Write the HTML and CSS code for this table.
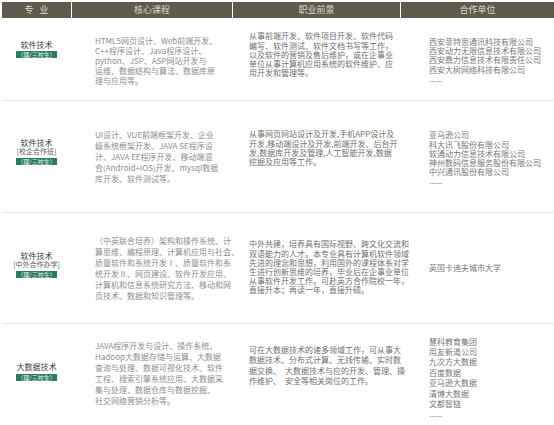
FILE: index.html
```html
<!DOCTYPE html>
<html lang="zh-CN">
<head>
<meta charset="utf-8">
<title>专业设置</title>
<link rel="stylesheet" href="styles.css">
</head>
<body>
<div class="table">
  <div class="head">
    <div class="hcell">专 业</div>
    <div class="hcell">核心课程</div>
    <div class="hcell">职业前景</div>
    <div class="hcell">合作单位</div>
  </div>

  <div class="row r1">
    <div class="major">
      <div class="name">软件技术</div>
      <div class="badge">（理/三校生）</div>
    </div>
    <div class="course">HTML5网页设计、Web前端开发、<br>C++程序设计、Java程序设计、<br>python、JSP、ASP网站开发与<br>运维、数据结构与算法、数据库原<br>理与应用等。</div>
    <div class="career">从事前端开发、软件项目开发、软件代码<br>编写、软件测试、软件文档书写等工作，<br>以及软件的营销及售后维护，或在企事业<br>单位从事计算机应用系统的软件维护、应<br>用开发和管理等。</div>
    <div class="partner">西安菲特思通讯科技有限公司<br>西安动力无限信息技术有限公司<br>西安鼎力信息技术有限责任公司<br>西安大树网络科技有限公司<br>......</div>
  </div>

  <div class="row r2">
    <div class="major">
      <div class="name">软件技术</div>
      <div class="sub">[校企合作班]</div>
      <div class="badge">（理/三校生）</div>
    </div>
    <div class="course">UI设计、VUE前端框架开发、企业<br>级系统框架开发、JAVA SE程序设<br>计、JAVA EE程序开发、移动端混<br>合(Android+IOS)开发、mysql数据<br>库开发、软件测试等。</div>
    <div class="career">从事网页网站设计及开发,手机APP设计及<br>开发,移动端设计及开发,前端开发、后台开<br>发,数据库开发及管理,人工智能开发,数据<br>挖掘及应用等工作。</div>
    <div class="partner">亚马逊公司<br>科大讯飞股份有限公司<br>软通动力信息技术有限公司<br>神州数码信息服务股份有限公司<br>中兴通讯股份有限公司<br>......</div>
  </div>

  <div class="row r3">
    <div class="major">
      <div class="name">软件技术</div>
      <div class="sub">[中外合作办学]</div>
      <div class="badge">（理/三校生）</div>
    </div>
    <div class="course">（中英联合培养）架构和操作系统、计<br>算思维、编程原理、计算机应用与社会、<br>质量软件和系统开发Ⅰ、质量软件和系<br>统开发Ⅱ、网页建设、软件开发应用、<br>计算机和信息系统研究方法、移动和网<br>页技术、数据和知识管理等。</div>
    <div class="career">中外共建，培养具有国际视野、跨文化交流和<br>双语能力的人才。本专业具有计算机软件领域<br>先进的理念和思想，利用国外的课程体系对学<br>生进行创新思维的培养，毕业后在企事业单位<br>从事软件开发工作。可赴英方合作院校一年，<br>直接升本；再读一年，直接升硕。</div>
    <div class="partner">英国卡迪夫城市大学</div>
  </div>

  <div class="row r4">
    <div class="major">
      <div class="name">大数据技术</div>
      <div class="badge">（理/三校生）</div>
    </div>
    <div class="course">JAVA程序开发与设计、操作系统、<br>Hadoop大数据存储与运算、大数据<br>查询与处理、数据可视化技术、软件<br>工程、搜索引擎系统应用、大数据采<br>集与处理、数据仓库与数据挖掘、<br>社交网络营销分析等。</div>
    <div class="career">可在大数据技术的诸多领域工作，可从事大<br>数据技术、分布式计算、无线传输、实时数<br>据交换、　大数据技术与应的开发、管理、操<br>作维护、　安全等相关岗位的工作。</div>
    <div class="partner">慧科教育集团<br>用友新道公司<br>九次方大数据<br>百度数据<br>亚马逊大数据<br>清博大数据<br>文都智链<br>......</div>
  </div>
</div>
</body>
</html>
```

FILE: styles.css
```css
* { box-sizing: border-box; }

html, body {
  margin: 0;
  padding: 0;
  background: #ffffff;
}

body {
  font-family: "Noto Sans CJK SC", "Noto Sans", sans-serif;
  width: 554px;
  height: 425px;
  overflow: hidden;
}

.table {
  padding: 2px 0 0 2px;
}

.head,
.row {
  display: grid;
  grid-template-columns: 69px 160px 167px 153px;
  column-gap: 1px;
}

.head {
  height: 16px;
}

.hcell {
  background: #5f5b4c;
  color: #dcd9cd;
  font-size: 9px;
  line-height: 16px;
  text-align: center;
}

.hcell:first-child {
  letter-spacing: 2px;
  text-indent: 2px;
}

.row {
  border-bottom: 1px solid #e6e6e6;
  align-items: start;
}

.r1 { height: 83px; }
.r2 { height: 112px; }
.r3 { height: 111px; }
.r4 { height: 110px; border-bottom: none; }

.major {
  display: flex;
  flex-direction: column;
  align-items: center;
}

.name {
  font-size: 8px;
  line-height: 9px;
  color: #3a3a3a;
}

.sub {
  font-size: 7px;
  line-height: 9px;
  color: #5a5a5a;
}

.badge {
  margin-top: 2.5px;
  background: #2b7b5f;
  color: #e8f3ee;
  font-size: 6px;
  line-height: 7px;
  height: 7px;
  padding: 0 1px;
  white-space: nowrap;
}

.course,
.career,
.partner {
  font-size: 8px;
  white-space: nowrap;
}

.course {
  padding-left: 23px;
  color: #8e8e8e;
  line-height: 11px;
}

.career {
  padding-left: 16px;
  color: #6f6f6f;
  line-height: 9.2px;
}

.partner {
  padding-left: 28px;
  color: #777777;
  line-height: 9.2px;
}

/* row 1 */
.r1 .major { padding-top: 21.5px; }
.r1 .course { padding-top: 17.7px; line-height: 10px; }
.r1 .career { padding-top: 13.4px; }
.r1 .partner { padding-top: 19px; }

/* row 2 */
.r2 .major { padding-top: 36.5px; }
.r2 .course { padding-top: 27.8px; }
.r2 .career { padding-top: 28.4px; line-height: 9.3px; }
.r2 .partner { padding-top: 29.4px; }

/* row 3 */
.r3 .major { padding-top: 37.5px; }
.r3 .course { padding-top: 22.2px; }
.r3 .career { padding-top: 26.4px; }
.r3 .partner { padding-top: 50.4px; }

/* row 4 */
.r4 .major { padding-top: 38px; }
.r4 .course { padding-top: 17.2px; line-height: 10.9px; }
.r4 .career { padding-top: 20.8px; line-height: 10.4px; }
.r4 .partner { padding-top: 12.5px; line-height: 10.4px; }
```
